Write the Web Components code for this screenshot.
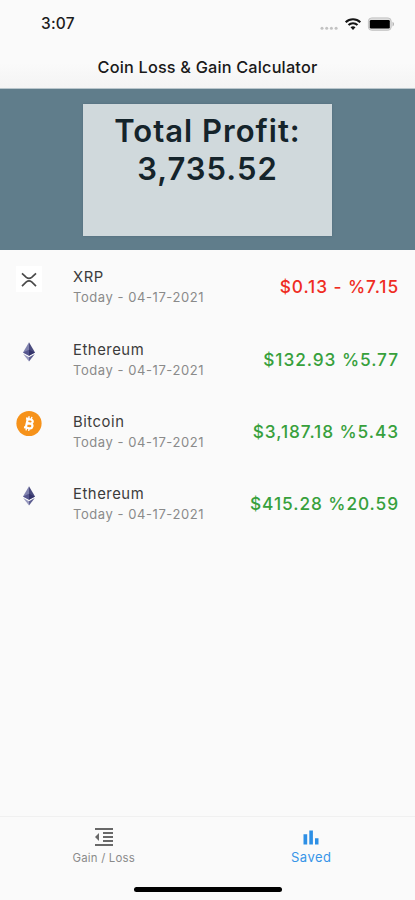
<!DOCTYPE html>
<html lang="en">
<head>
<meta charset="utf-8">
<title>Coin Loss &amp; Gain Calculator</title>
<style>
html,body{margin:0;height:100%}
body{background:#fafafa;font-family:Inter,"Liberation Sans",sans-serif;overflow:hidden}
</style>
</head>
<body>
<coin-app></coin-app>
<script>
const define = (name, html) => {
  const t = document.createElement('template');
  t.innerHTML = html;
  customElements.define(name, class extends HTMLElement {
    constructor() {
      super();
      this.attachShadow({mode: 'open'}).append(t.content.cloneNode(true));
    }
  });
};

define('status-bar', `
<style>
:host{display:flex;height:46px;box-sizing:border-box;padding:1px 20px 0 41px;justify-content:space-between;align-items:center;color:#1c1c1c}
time{font-size:15.5px;font-weight:500;letter-spacing:.2px;line-height:20px}
svg{display:block}
</style>
<time>3:07</time>
<svg width="76" height="16" viewBox="319 15 76 16">
  <g fill="#c2c2c2"><circle cx="322" cy="27.2" r="1.5"/><circle cx="326.7" cy="27.2" r="1.5"/><circle cx="331.4" cy="27.2" r="1.5"/><circle cx="336.1" cy="27.2" r="1.5"/></g>
  <g fill="none" stroke="#151515" stroke-width="2.1"><path d="M345.7 21.2a10.4 10.4 0 0 1 14.6 0"/><path d="M348.5 24.1a6.5 6.5 0 0 1 9 0"/></g>
  <path d="M353 28.9l-2.5-2.6a3.7 3.7 0 0 1 5 0z" fill="#151515"/>
  <rect x="368.4" y="16.9" width="22.8" height="12.4" rx="3.3" fill="#dcdcdc" stroke="#c4c4c4"/>
  <rect x="369.8" y="19" width="20" height="8.5" rx="1.3" fill="#000"/>
  <path d="M392.5 20.8c2 .8 2 3.8 0 4.6z" fill="#b4b4b4"/>
</svg>`);

define('nav-title', `
<style>
:host{display:flex;height:43px;align-items:center;justify-content:center;box-sizing:border-box;background:linear-gradient(#fafafa 40%,#f4f4f4);border-bottom:1px solid #b9c6cc}
h1{margin:0;font-size:16.3px;font-weight:500;letter-spacing:.18px;color:#1a1a1a;white-space:nowrap}
</style><h1><slot></slot></h1>`);

define('profit-panel', `
<style>
:host{display:block;height:161px;box-sizing:border-box;padding-top:15px;background:#607d8b}
div{box-sizing:border-box;width:249px;height:132px;margin:0 auto;padding-top:8px;background:#d0d9dc;box-shadow:0 0 2px #4f6b79;color:#15242b;font-size:31px;line-height:38px;font-weight:600;text-align:center;letter-spacing:1px}
</style>
<div><slot></slot></div>`);

define('coin-row', `
<style>
:host{display:grid;grid-template-columns:58px 1fr auto;height:72.33px;box-sizing:border-box;padding:15.5px 16px 0 15px}
.name{font-size:14.8px;line-height:22px;margin-top:.8px;color:#3c3c3c;letter-spacing:.55px}
.date{font-size:13px;line-height:19px;color:#8a8a8a;white-space:nowrap;letter-spacing:.56px}
.amount{font-size:17.3px;font-weight:500;line-height:24px;margin-top:9.8px;letter-spacing:.93px;color:var(--amount,#37a03c);white-space:nowrap}
</style>
<slot name="icon"></slot>
<div><div class="name"><slot name="name"></slot></div><div class="date"><slot name="date"></slot></div></div>
<div class="amount"><slot></slot></div>`);

define('icon-xrp', `
<style>:host{display:block}svg{display:block}</style>
<svg width="28" height="28" viewBox="0 0 28 28"><rect x="1" width="26" height="26" fill="#fff"/>
<path d="M7 7.3l4.3 4.1q2.7 2 5.4 0L21 7.3M7 20.1l4.3-4.2q2.7-2 5.4 0l4.3 4.2" fill="none" stroke="#4a4a4a" stroke-width="1.7"/></svg>`);
define('icon-eth', `
<style>:host{display:block}svg{display:block}</style>
<svg width="28" height="28" viewBox="0 0 28 28">
<path d="M14 4.3L8 14.4l6 3.4z" fill="#8082ae"/><path d="M14 4.3l6 10.1-6 3.4z" fill="#494a7d"/>
<path d="M8 14.4l6-2.7v6.1z" fill="#55568e"/><path d="M20 14.4l-6-2.7v6.1z" fill="#34346b"/>
<path d="M8.2 16l5.8 7.6v-4.3z" fill="#9798be"/><path d="M19.8 16L14 23.6v-4.3z" fill="#5c5d90"/></svg>`);
define('icon-btc', `
<style>:host{display:block}svg{display:block}</style>
<svg width="28" height="28" viewBox="0 0 28 28"><circle cx="14" cy="13.5" r="12.6" fill="#f6921a"/>
<g transform="rotate(13 14 13.5)" fill="none" stroke="#fff"><path d="M10 9.2h4.7c3.4 0 3.4 4.2 0 4.2h-3h3.6c3.6 0 3.6 4.7 0 4.7H10M11.8 9v9.2" stroke-width="2.2"/><path d="M12.6 6.4v3M15.3 6.4v3M12.6 18v2.8M15.3 18v2.8" stroke-width="1.4"/></g></svg>`);

define('tab-item', `
<style>
:host{flex:1;display:flex;flex-direction:column;align-items:center;color:var(--tab-color);font-size:var(--tab-size);letter-spacing:var(--tab-spacing,0)}
span{line-height:var(--tab-line,18px);white-space:nowrap}
</style><slot name="icon"></slot><span><slot></slot></span>`);

define('tab-bar', `
<style>
:host{display:flex;flex-direction:column;align-items:center;height:84px;box-sizing:border-box;border-top:1px solid #f0f0f0;background:#fafafa}
nav{display:flex;width:100%;height:70px;padding-top:8px;box-sizing:border-box}
svg{display:block;width:24px;height:24px}
.off{--tab-color:#8a8a8a;--tab-size:11.4px;--tab-spacing:.2px}
.on{--tab-color:#3795e8;--tab-size:13px;--tab-spacing:.5px;--tab-line:16px}
i{width:148px;height:5px;border-radius:3px;background:#000}
</style>
<nav>
<tab-item class="off"><svg slot="icon" viewBox="0 0 24 24" fill="#686868"><path d="M3 3h18v2H3zM11 7h10v2H11zM11 11h10v2H11zM11 15h10v2H11zM3 19h18v2H3zM3 12l4-4v8z"/></svg>Gain / Loss</tab-item>
<tab-item class="on"><svg slot="icon" viewBox="0 0 24 24" fill="#2d8fe5"><path d="M4.5 9.3h3.7V19.5H4.5zM10.3 5.5h3.6v14h-3.6zM16 13.3h3.5v6.2H16z"/></svg>Saved</tab-item>
</nav><i></i>`);

define('coin-app', `
<style>
:host{display:flex;flex-direction:column;width:415px;height:900px}
main{flex:1}
.loss{--amount:#ef2c22}
</style>
<status-bar></status-bar>
<nav-title>Coin Loss &amp; Gain Calculator</nav-title>
<profit-panel>Total Profit:<br>3,735.52</profit-panel>
<main>
<coin-row class="loss"><icon-xrp slot="icon"></icon-xrp><span slot="name">XRP</span><span slot="date">Today - 04-17-2021</span>$0.13 - %7.15</coin-row>
<coin-row><icon-eth slot="icon"></icon-eth><span slot="name">Ethereum</span><span slot="date">Today - 04-17-2021</span>$132.93 %5.77</coin-row>
<coin-row><icon-btc slot="icon"></icon-btc><span slot="name">Bitcoin</span><span slot="date">Today - 04-17-2021</span>$3,187.18 %5.43</coin-row>
<coin-row><icon-eth slot="icon"></icon-eth><span slot="name">Ethereum</span><span slot="date">Today - 04-17-2021</span>$415.28 %20.59</coin-row>
</main>
<tab-bar></tab-bar>`);
</script>
</body>
</html>
